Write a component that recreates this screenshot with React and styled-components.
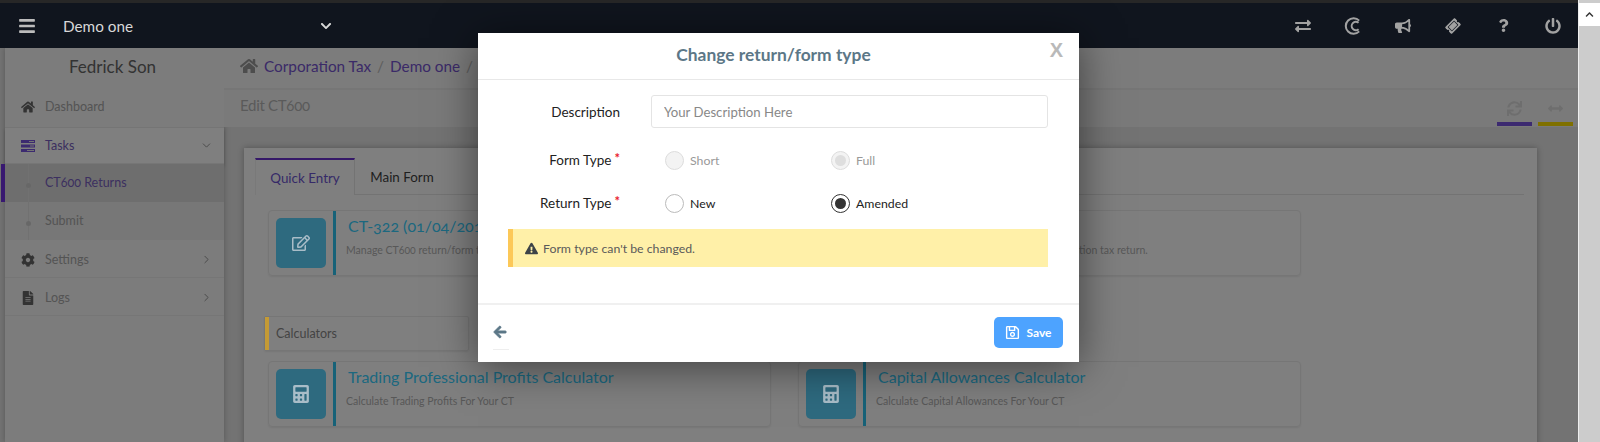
import React from 'react';
import styled, { createGlobalStyle } from 'styled-components';
import {
  FaBars, FaChevronDown, FaChevronUp, FaHome, FaCog, FaFileAlt, FaRegEdit, FaCalculator,
  FaRegSave, FaExclamationTriangle, FaArrowLeft, FaExchangeAlt, FaBullhorn, FaTicketAlt, FaQuestion,
  FaPowerOff, FaSync, FaArrowsAltH,
} from 'react-icons/fa';
import { ChevronDown, ChevronRight } from 'lucide-react';

const GlobalStyle = createGlobalStyle`
  html, body {
    margin: 0;
    padding: 0;
    background: #808080;
  }
  * {
    box-sizing: border-box;
  }
  body {
    font-family: Lato, "Noto Sans", sans-serif;
    font-feature-settings: "onum";
    overflow: hidden;
  }
`;

const TasksIcon = () => (
  <svg width="14" height="12" viewBox="0 0 14 12" fill="#7854e0">
    <rect x="0" y="0" width="14" height="3" />
    <rect x="0" y="4.5" width="14" height="3" />
    <rect x="0" y="9" width="14" height="3" />
    <rect x="8" y="1" width="5" height="1" fill="#e8e8e8" />
    <rect x="9" y="5.5" width="4" height="1" fill="#e8e8e8" />
    <rect x="6" y="10" width="7" height="1" fill="#e8e8e8" />
  </svg>
);

const CopyIcon = () => (
  <svg width="18" height="18" viewBox="0 0 18 18" fill="none" stroke="currentColor" strokeWidth="2">
    <path d="M15.2 3.6A7.8 7.8 0 1 0 15.2 14.4" />
    <path d="M14.6 5.8A4.2 4.2 0 1 0 14.6 12.2" />
  </svg>
);

const Shell = styled.div`
  display: flex;
  width: 1600px;
  height: 442px;
  overflow: hidden;
`;

const Page = styled.div`
  position: relative;
  width: 1578px;
  height: 442px;
  overflow: hidden;
  background: #e6e6e6;
`;

const TopStrip = styled.div`
  height: 3px;
  background: #4e4e4e;
`;

const Navbar = styled.header`
  position: relative;
  z-index: 2;
  display: flex;
  align-items: center;
  height: 45px;
  padding-left: 18px;
  background: #10151e;
  color: #d8d8d8;
`;

const Burger = styled.span`
  display: flex;
  width: 45px;
  font-size: 18px;
  color: #bcbcbc;
`;

const ClientName = styled.span`
  width: 257px;
  font-size: 15.3px;
`;

const NavIcons = styled.div`
  display: flex;
  align-items: center;
  margin-left: auto;
`;

const NavIcon = styled.span`
  display: flex;
  justify-content: center;
  width: 50px;
  font-size: ${(p) => p.$size || 16}px;
  color: #a2a2a2;
`;

const Body = styled.div`
  display: flex;
  align-items: stretch;
  height: 394px;
  padding-left: 5px;
`;

const Sidebar = styled.aside`
  flex: none;
  width: 219px;
  background: #f8f8f8;
  box-shadow: 0 0 6px rgba(0, 0, 0, 0.25);
`;

const UserName = styled.div`
  height: 40px;
  padding: 8px 4px 0 0;
  text-align: center;
  font-size: 17px;
  color: #666;
`;

const NavRow = styled.div`
  position: relative;
  display: flex;
  align-items: center;
  height: ${(p) => p.$h}px;
  padding: ${(p) => p.$pt || 0}px 11px ${(p) => p.$pb ?? 2}px 16px;
  border-bottom: 1px solid #ececec;
  font-size: 12.5px;
  background: ${(p) => (p.$bg ? p.$bg : 'transparent')};
  color: ${(p) => (p.$purple ? '#7860c0' : '#a8a8a8')};
  box-shadow: ${(p) => (p.$raised ? '0 2px 3px rgba(0,0,0,.2)' : 'none')};
`;

const NavGlyph = styled.span`
  display: flex;
  width: 24px;
  font-size: 14px;
  color: #666;
`;

const NavCaret = styled.span`
  display: flex;
  margin-left: auto;
  color: #888;
`;

const SubRow = styled(NavRow)`
  padding-left: 40px;
  border-bottom: 0;
  &::before {
    content: '';
    position: absolute;
    left: 23px;
    top: 0;
    bottom: 0;
    border-left: 1px solid #e2e2e2;
  }
  &::after {
    content: '';
    position: absolute;
    left: 21px;
    top: 50%;
    width: 5px;
    height: 5px;
    border-radius: 50%;
    background: #cfcfcf;
  }
`;

const ActiveMark = styled.span`
  position: absolute;
  left: -4px;
  top: 0;
  bottom: 0;
  width: 4px;
  background: #7030e0;
`;

const Main = styled.main`
  flex: 1;
  min-width: 0;
`;

const Breadcrumb = styled.div`
  display: flex;
  align-items: center;
  gap: 6px;
  height: 42px;
  padding: 0 0 4px 16px;
  background: #f8f8f8;
  border-bottom: 2px solid #ececec;
  font-size: 15.3px;
  white-space: nowrap;
`;

const Crumb = styled.span`
  color: ${(p) => (p.$sep ? '#bbb' : '#7654d0')};
`;

const HomeGlyph = styled.span`
  display: flex;
  font-size: 18px;
  color: #9a9a9a;
`;

const TitleBar = styled.div`
  display: flex;
  align-items: flex-start;
  height: 37px;
  padding: 6px 5px 0 16px;
  background: #f4f4f4;
`;

const PageTitle = styled.div`
  font-size: 15px;
  letter-spacing: -0.3px;
  color: #b4b4b4;
`;

const ActionBars = styled.div`
  display: flex;
  gap: 6px;
  margin-left: auto;
`;

const ActionBar = styled.div`
  display: flex;
  align-items: center;
  justify-content: center;
  width: 35px;
  height: 31px;
  margin-top: -1px;
  border-bottom: 4px solid ${(p) => p.$color};
  color: #dcdcdc;
  font-size: 15px;
`;

const Sheet = styled.section`
  width: 1293px;
  height: 300px;
  margin: 21px 0 0 20px;
  padding: 10px 13px 10px 11px;
  background: #fff;
  box-shadow: 0 0 6px rgba(0, 0, 0, 0.3);
`;

const Tabs = styled.div`
  display: flex;
  height: 37px;
  border-bottom: 1px solid #e6e6e6;
`;

const Tab = styled.div`
  display: flex;
  align-items: center;
  justify-content: center;
  width: ${(p) => p.$w}px;
  height: 37px;
  font-size: 13.4px;
  border-top: ${(p) => (p.$active ? '2px solid #6a30d0' : '0')};
  border-right: ${(p) => (p.$active ? '1px solid #e6e6e6' : '0')};
  border-left: ${(p) => (p.$active ? '1px solid #f2f2f2' : '0')};
  background: ${(p) => (p.$active ? '#fff' : 'transparent')};
  color: ${(p) => (p.$active ? '#6c54d0' : '#3e3e3e')};
`;

const CardRow = styled.div`
  display: flex;
  gap: 27px;
  margin: ${(p) => p.$top}px 0 0 13px;
`;

const LinkCard = styled.div`
  display: flex;
  width: 503px;
  height: 66px;
  border: 1px solid #ececec;
  border-radius: 4px;
  box-shadow: 0 1px 2px rgba(0, 0, 0, 0.08);
`;

const CardIcon = styled.div`
  display: flex;
  align-items: center;
  justify-content: center;
  flex: none;
  width: 50px;
  height: 50px;
  margin: 7px 7px 0;
  border-radius: 5px;
  background: #5cd4ff;
`;

// sits above the backdrop: the glyph is brighter than the dimmed page in the picture
const CardGlyph = styled.span`
  position: relative;
  z-index: 2;
  display: flex;
  font-size: 18px;
  color: #a9bdc8;
`;

const CardText = styled.div`
  flex: 1;
  min-width: 0;
  height: 64px;
  padding-left: 12px;
  border-left: 3px solid #2ec4f0;
  white-space: nowrap;
`;

const CardTitle = styled.div`
  margin-top: 5px;
  font-size: 16px;
  color: #38d0ff;
`;

const CardDesc = styled.div`
  margin: 9px 0 0 -2px;
  font-size: 10.5px;
  color: #b0b0b0;
`;

const SectionHead = styled.div`
  position: relative;
  display: flex;
  align-items: center;
  width: 205px;
  height: 35px;
  margin: 40px 0 0 9px;
  padding: 0 0 1px 11px;
  border: 1px solid #ececec;
  border-radius: 2px;
  font-size: 12.5px;
  color: #888;
  box-shadow: 0 1px 2px rgba(0, 0, 0, 0.08);
  &::before {
    content: '';
    position: absolute;
    z-index: 2;
    left: 0;
    top: 0;
    bottom: 0;
    width: 4px;
    background: #c49a35;
  }
`;

const Backdrop = styled.div`
  position: absolute;
  inset: 0;
  padding: 33px 0 0 478px;
  background: rgba(0, 0, 0, 0.5);
`;

const Modal = styled.div`
  position: relative;
  z-index: 3;
  width: 601px;
  height: 329px;
  background: #fff;
  box-shadow: 0 5px 40px rgba(0, 0, 0, 0.5);
  color: #222;
`;

const ModalHead = styled.div`
  position: relative;
  height: 47px;
  padding: 11px 10px 0 0;
  border-bottom: 1px solid #e8e8e8;
  text-align: center;
  font-size: 17.4px;
  font-weight: 700;
  color: #5c7787;
`;

const CloseX = styled.span`
  position: absolute;
  right: 16px;
  top: 6px;
  font-size: 20px;
  color: #b9b9b9;
  font-family: "Liberation Sans", sans-serif;
`;

const ModalBody = styled.div`
  height: 223px;
  padding: 15px 31px 0 30px;
`;

const FormRow = styled.div`
  display: flex;
  align-items: center;
  height: ${(p) => p.$h}px;
  margin-top: ${(p) => p.$top || 0}px;
`;

const FieldLabel = styled.label`
  flex: none;
  width: 112px;
  margin-right: ${(p) => p.$gap}px;
  text-align: right;
  font-size: 13.5px;
  color: #222;
`;

const Required = styled.span`
  margin-left: 3px;
  color: #e9202c;
  font-size: 13px;
  font-weight: 700;
  line-height: 0;
  vertical-align: 2px;
`;

const TextField = styled.input`
  width: 397px;
  height: 33px;
  padding: 0 12px;
  border: 1px solid #e4e4e4;
  border-radius: 3px;
  font: inherit;
  font-size: 13.2px;
  outline: none;
  &::placeholder {
    color: #888;
  }
`;

const RadioOption = styled.div`
  display: flex;
  align-items: center;
  gap: 6px;
  width: 166px;
  font-size: 12.3px;
  color: ${(p) => (p.$disabled ? '#999' : '#222')};
`;

const RadioDot = styled.span`
  display: flex;
  align-items: center;
  justify-content: center;
  width: 19px;
  height: 19px;
  border-radius: 50%;
  border: 1px solid ${(p) => (p.$disabled ? '#ddd' : p.$checked ? '#333' : '#bbb')};
  background: ${(p) => (p.$disabled ? '#f3f3f3' : '#fff')};
  &::after {
    content: '';
    display: ${(p) => (p.$checked ? 'block' : 'none')};
    width: 11px;
    height: 11px;
    border-radius: 50%;
    background: ${(p) => (p.$disabled ? '#dedede' : '#333')};
  }
`;

const Notice = styled.div`
  display: flex;
  align-items: center;
  gap: 5px;
  width: 540px;
  height: 38px;
  margin-top: 14px;
  padding-left: 12px;
  border-left: 5px solid #fcc858;
  background: #fff0a8;
  font-size: 12.3px;
  color: #5a5a5a;
`;

const NoticeGlyph = styled.span`
  display: flex;
  font-size: 13px;
  color: #3d4347;
`;

const ModalFoot = styled.div`
  display: flex;
  align-items: flex-start;
  justify-content: space-between;
  height: 59px;
  padding: 12px 16px 0 15px;
  border-top: 2px solid #f0f0f0;
`;

const BackLink = styled.span`
  display: flex;
  width: 16px;
  height: 33px;
  padding-top: 8px;
  border-bottom: 1px solid #eee;
  font-size: 14px;
  color: #5c7787;
  & > svg {
    stroke: currentColor;
    stroke-width: 30px;
  }
`;

const SaveButton = styled.button`
  display: flex;
  align-items: center;
  justify-content: center;
  gap: 6px;
  width: 69px;
  height: 31px;
  border: 0;
  border-radius: 5px;
  background: #4da3ff;
  color: #fff;
  font: inherit;
  font-size: 12px;
  font-weight: 700;
`;

const Scrollbar = styled.div`
  width: 22px;
  height: 442px;
  background: #cccccc;
  border-left: 1px solid #eee;
`;

const ScrollButton = styled.div`
  display: flex;
  align-items: center;
  justify-content: center;
  height: 23px;
  margin-top: 3px;
  background: #fff;
  font-size: 9px;
  color: #333;
`;

export default function App() {
  return (
    <Shell>
      <GlobalStyle />
      <Page>
        <TopStrip />
        <Navbar>
          <Burger><FaBars /></Burger>
          <ClientName>Demo one</ClientName>
          <FaChevronDown size={12} />
          <NavIcons>
            <NavIcon><FaExchangeAlt /></NavIcon>
            <NavIcon><CopyIcon /></NavIcon>
            <NavIcon><FaBullhorn /></NavIcon>
            <NavIcon $size={14}><FaTicketAlt style={{ transform: 'rotate(-45deg)' }} /></NavIcon>
            <NavIcon><FaQuestion size={13} /></NavIcon>
            <NavIcon><FaPowerOff /></NavIcon>
          </NavIcons>
        </Navbar>
        <Body>
          <Sidebar>
            <UserName>Fedrick Son</UserName>
            <NavRow $h={40}><NavGlyph><FaHome /></NavGlyph>Dashboard</NavRow>
            <NavRow $h={36} $pb={0} $bg="#fff" $purple $raised>
              <NavGlyph><TasksIcon /></NavGlyph>Tasks
              <NavCaret><ChevronDown size={13} strokeWidth={1.6} /></NavCaret>
            </NavRow>
            <SubRow $h={38} $bg="#dcdcdc" $purple><ActiveMark />CT600 Returns</SubRow>
            <SubRow $h={38} $bg="#eeeeee">Submit</SubRow>
            <NavRow $h={38} $pt={2} $pb={0}><NavGlyph><FaCog /></NavGlyph>Settings<NavCaret><ChevronRight size={13} strokeWidth={1.6} /></NavCaret></NavRow>
            <NavRow $h={38} $pt={2} $pb={0}><NavGlyph><FaFileAlt /></NavGlyph>Logs<NavCaret><ChevronRight size={13} strokeWidth={1.6} /></NavCaret></NavRow>
          </Sidebar>
          <Main>
            <Breadcrumb>
              <HomeGlyph><FaHome /></HomeGlyph>
              <Crumb>Corporation Tax</Crumb><Crumb $sep>/</Crumb>
              <Crumb>Demo one</Crumb><Crumb $sep>/</Crumb>
              <Crumb>CT600</Crumb>
            </Breadcrumb>
            <TitleBar>
              <PageTitle>Edit CT600</PageTitle>
              <ActionBars>
                <ActionBar $color="#7854e0"><FaSync /></ActionBar>
                <ActionBar $color="#fee000"><FaArrowsAltH /></ActionBar>
              </ActionBars>
            </TitleBar>
            <Sheet>
              <Tabs>
                <Tab $active $w={100}>Quick Entry</Tab>
                <Tab $w={94}>Main Form</Tab>
              </Tabs>
              <CardRow $top={15}>
                <LinkCard>
                  <CardIcon><CardGlyph><FaRegEdit /></CardGlyph></CardIcon>
                  <CardText>
                    <CardTitle>CT-322 (01/04/2016 - 31/03/2017)</CardTitle>
                    <CardDesc>Manage CT600 return/form type</CardDesc>
                  </CardText>
                </LinkCard>
                <LinkCard>
                  <CardIcon><CardGlyph><FaRegEdit /></CardGlyph></CardIcon>
                  <CardText>
                    <CardTitle>Submit Return</CardTitle>
                    <CardDesc>Review and submit your final CT600 corporation tax return.</CardDesc>
                  </CardText>
                </LinkCard>
              </CardRow>
              <SectionHead>Calculators</SectionHead>
              <CardRow $top={10}>
                <LinkCard>
                  <CardIcon><CardGlyph><FaCalculator /></CardGlyph></CardIcon>
                  <CardText>
                    <CardTitle>Trading Professional Profits Calculator</CardTitle>
                    <CardDesc>Calculate Trading Profits For Your CT</CardDesc>
                  </CardText>
                </LinkCard>
                <LinkCard>
                  <CardIcon><CardGlyph><FaCalculator /></CardGlyph></CardIcon>
                  <CardText>
                    <CardTitle>Capital Allowances Calculator</CardTitle>
                    <CardDesc>Calculate Capital Allowances For Your CT</CardDesc>
                  </CardText>
                </LinkCard>
              </CardRow>
            </Sheet>
          </Main>
        </Body>
        <Backdrop>
          <Modal>
            <ModalHead>Change return/form type<CloseX>X</CloseX></ModalHead>
            <ModalBody>
              <FormRow $h={33}>
                <FieldLabel $gap={31}>Description</FieldLabel>
                <TextField placeholder="Your Description Here" />
              </FormRow>
              <FormRow $h={24} $top={20}>
                <FieldLabel $gap={45}>Form Type<Required>*</Required></FieldLabel>
                <RadioOption $disabled><RadioDot $disabled />Short</RadioOption>
                <RadioOption $disabled><RadioDot $disabled $checked />Full</RadioOption>
              </FormRow>
              <FormRow $h={24} $top={19}>
                <FieldLabel $gap={45}>Return Type<Required>*</Required></FieldLabel>
                <RadioOption><RadioDot />New</RadioOption>
                <RadioOption><RadioDot $checked />Amended</RadioOption>
              </FormRow>
              <Notice>
                <NoticeGlyph><FaExclamationTriangle /></NoticeGlyph>
                Form type can't be changed.
              </Notice>
            </ModalBody>
            <ModalFoot>
              <BackLink><FaArrowLeft /></BackLink>
              <SaveButton><FaRegSave size={15} />Save</SaveButton>
            </ModalFoot>
          </Modal>
        </Backdrop>
      </Page>
      <Scrollbar>
        <ScrollButton><FaChevronUp /></ScrollButton>
      </Scrollbar>
    </Shell>
  );
}
